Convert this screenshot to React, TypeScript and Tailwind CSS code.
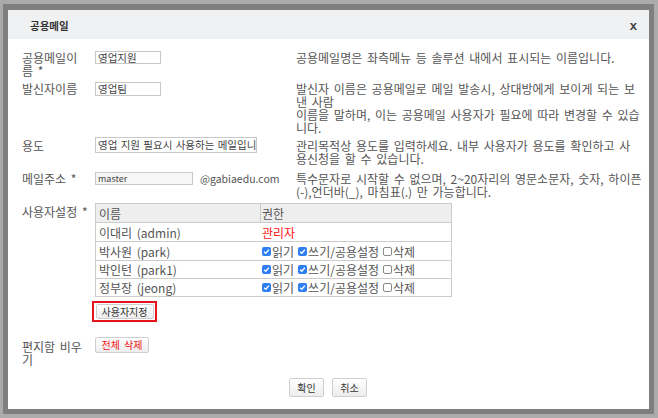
import React from "react";

const font = { fontFamily: '"Noto Sans CJK KR", "Noto Sans", sans-serif' };

function Check({ on }: { on: boolean }) {
  if (on) {
    return (
      <span className="inline-flex w-[9px] h-[9px] rounded-[2px] bg-[#2f7ef2] items-center justify-center mr-[1px] shrink-0">
        <svg width="7" height="7" viewBox="0 0 8 8">
          <path d="M1.3 4.2 L3.2 6 L6.8 1.8" fill="none" stroke="#fff" strokeWidth="1.5" />
        </svg>
      </span>
    );
  }
  return <span className="inline-block w-[9px] h-[9px] rounded-[2px] border border-[#8a8a8a] bg-white mr-[1px] shrink-0" />;
}

function Perm() {
  return (
    <div className="flex items-center">
      <Check on />
      <span>읽기</span>
      <span className="ml-[4px]" />
      <Check on />
      <span>쓰기/공용설정</span>
      <span className="ml-[4px]" />
      <Check on={false} />
      <span>삭제</span>
    </div>
  );
}

function Btn({ children, className = "" }: { children: React.ReactNode; className?: string }) {
  return (
    <div
      className={
        "flex items-center justify-center border border-[#cfcfcf] rounded-[2px] bg-gradient-to-b from-[#ffffff] to-[#ededed] text-[10px] leading-none text-[#333] shrink-0 " +
        className
      }
    >
      {children}
    </div>
  );
}

const rows: [string, string, string][] = [
  ["이대리 (admin)", "admin", "h-[19px] border-b"],
  ["박사원 (park)", "p", "h-[19px] border-b"],
  ["박인턴 (park1)", "p", "h-[18px] border-b"],
  ["정부장 (jeong)", "p", "h-[17px]"],
];

export default function App() {
  return (
    <div className="w-[658px] h-[418px] bg-[#ababab] pt-[4px] pl-[3px] overflow-hidden text-[#555] [word-spacing:2px]" style={font}>
      <div className="w-[651px] h-[410px] border-t-[6px] border-l-[5px] border-r-[5px] border-b-[5px] border-[#7f7f7f] bg-white flex flex-col overflow-hidden">
        {/* header */}
        <div className="h-[29px] shrink-0 bg-[#f0f1f3] flex items-center justify-between pl-[22px] pr-[12px] pt-[2px]">
          <span className="text-[10.5px] font-bold text-[#333]">공용메일</span>
          <span className="text-[13px] font-bold text-[#444] leading-none" style={{ fontFamily: '"Liberation Sans", sans-serif' }}>
            x
          </span>
        </div>
        {/* body */}
        <div className="pt-[12px] pl-[14px] text-[12px] leading-[13px] flex flex-col shrink-0">
          {/* row 1 */}
          <div className="flex">
            <div className="w-[73px] shrink-0">
              <div>공용메일이</div>
              <div>름 *</div>
            </div>
            <div className="w-[201px] shrink-0">
              <div className="w-[66px] h-[13px] border border-[#c8c8c8] pl-[2px] text-[10.5px] leading-[11px] text-[#444]">영업지원</div>
            </div>
            <div className="whitespace-nowrap">공용메일명은 좌측메뉴 등 솔루션 내에서 표시되는 이름입니다.</div>
          </div>
          {/* row 2 */}
          <div className="flex mt-[5px]">
            <div className="w-[73px] shrink-0">발신자이름</div>
            <div className="w-[201px] shrink-0">
              <div className="w-[66px] h-[14px] border border-[#c8c8c8] pl-[2px] text-[10.5px] leading-[12px] text-[#444]">영업팀</div>
            </div>
            <div className="whitespace-nowrap">
              <div>발신자 이름은 공용메일로 메일 발송시, 상대방에게 보이게 되는 보</div>
              <div>낸 사람</div>
              <div>이름을 말하며, 이는 공용메일 사용자가 필요에 따라 변경할 수 있습</div>
              <div>니다.</div>
            </div>
          </div>
          {/* row 3 */}
          <div className="flex mt-[5px]">
            <div className="w-[73px] shrink-0">용도</div>
            <div className="w-[201px] shrink-0 -mt-[2px]">
              <div className="w-[162px] h-[16px] border border-[#c8c8c8] pl-[2px] text-[10.5px] leading-[14px] text-[#444] overflow-hidden whitespace-nowrap [word-spacing:1px]">
                영업 지원 필요시 사용하는 메일입니다
              </div>
            </div>
            <div className="whitespace-nowrap">
              <div>관리목적상 용도를 입력하세요. 내부 사용자가 용도를 확인하고 사</div>
              <div>용신청을 할 수 있습니다.</div>
            </div>
          </div>
          {/* row 4 */}
          <div className="flex mt-[7px]">
            <div className="w-[73px] shrink-0">메일주소 *</div>
            <div className="w-[201px] shrink-0 flex items-start">
              <div className="w-[98px] h-[13px] border border-[#c8c8c8] bg-[#f6f6f6] pl-[2px] text-[9px] leading-[12px] text-[#444]">master</div>
              <span className="ml-[7px] text-[10.5px] leading-[13px]">@gabiaedu.com</span>
            </div>
            <div className="whitespace-nowrap">
              <div>특수문자로 시작할 수 없으며, 2~20자리의 영문소문자, 숫자, 하이픈</div>
              <div>(-),언더바(_), 마침표(.) 만 가능합니다.</div>
            </div>
          </div>
          {/* row 5 */}
          <div className="flex mt-[6px]">
            <div className="w-[73px] shrink-0 pt-[1px]">사용자설정 *</div>
            <div className="flex flex-col -mt-[1px]">
              <div className="w-[357px] border border-[#cccccc]">
                <div className="flex h-[19px] bg-[#eeeeee] border-b border-[#cccccc] items-stretch">
                  <div className="w-[165px] flex items-center pl-[3px] border-r border-[#cccccc]">이름</div>
                  <div className="pl-[1px] flex items-center">권한</div>
                </div>
                {rows.map(([n, t, cls], i) => (
                  <div key={i} className={"flex items-center border-[#cccccc] " + cls}>
                    <div className="w-[165px] pl-[3px]">{n}</div>
                    <div className="pl-[1px]">
                      {t === "admin" ? <span className="text-[#ff1010]">관리자</span> : <Perm />}
                    </div>
                  </div>
                ))}
              </div>
              <div className="mt-[4px] -ml-[3px] w-[65px] h-[21px] border-2 border-[#e3141c] flex items-center justify-center">
                <Btn className="w-[58px] h-[15px]">사용자지정</Btn>
              </div>
            </div>
          </div>
          {/* row 6 */}
          <div className="flex mt-[15px]">
            <div className="w-[73px] shrink-0 pt-[3px]">
              <div>편지함 비우</div>
              <div>기</div>
            </div>
            <div>
              <Btn className="w-[54px] h-[16px]">
                <span className="text-[#ee1111]">전체 삭제</span>
              </Btn>
            </div>
          </div>
        </div>
        {/* footer */}
        <div className="flex justify-center gap-[8px] mt-[12px] pr-[1px] shrink-0">
          <Btn className="w-[35px] h-[19px]">확인</Btn>
          <Btn className="w-[35px] h-[19px]">취소</Btn>
        </div>
      </div>
    </div>
  );
}
